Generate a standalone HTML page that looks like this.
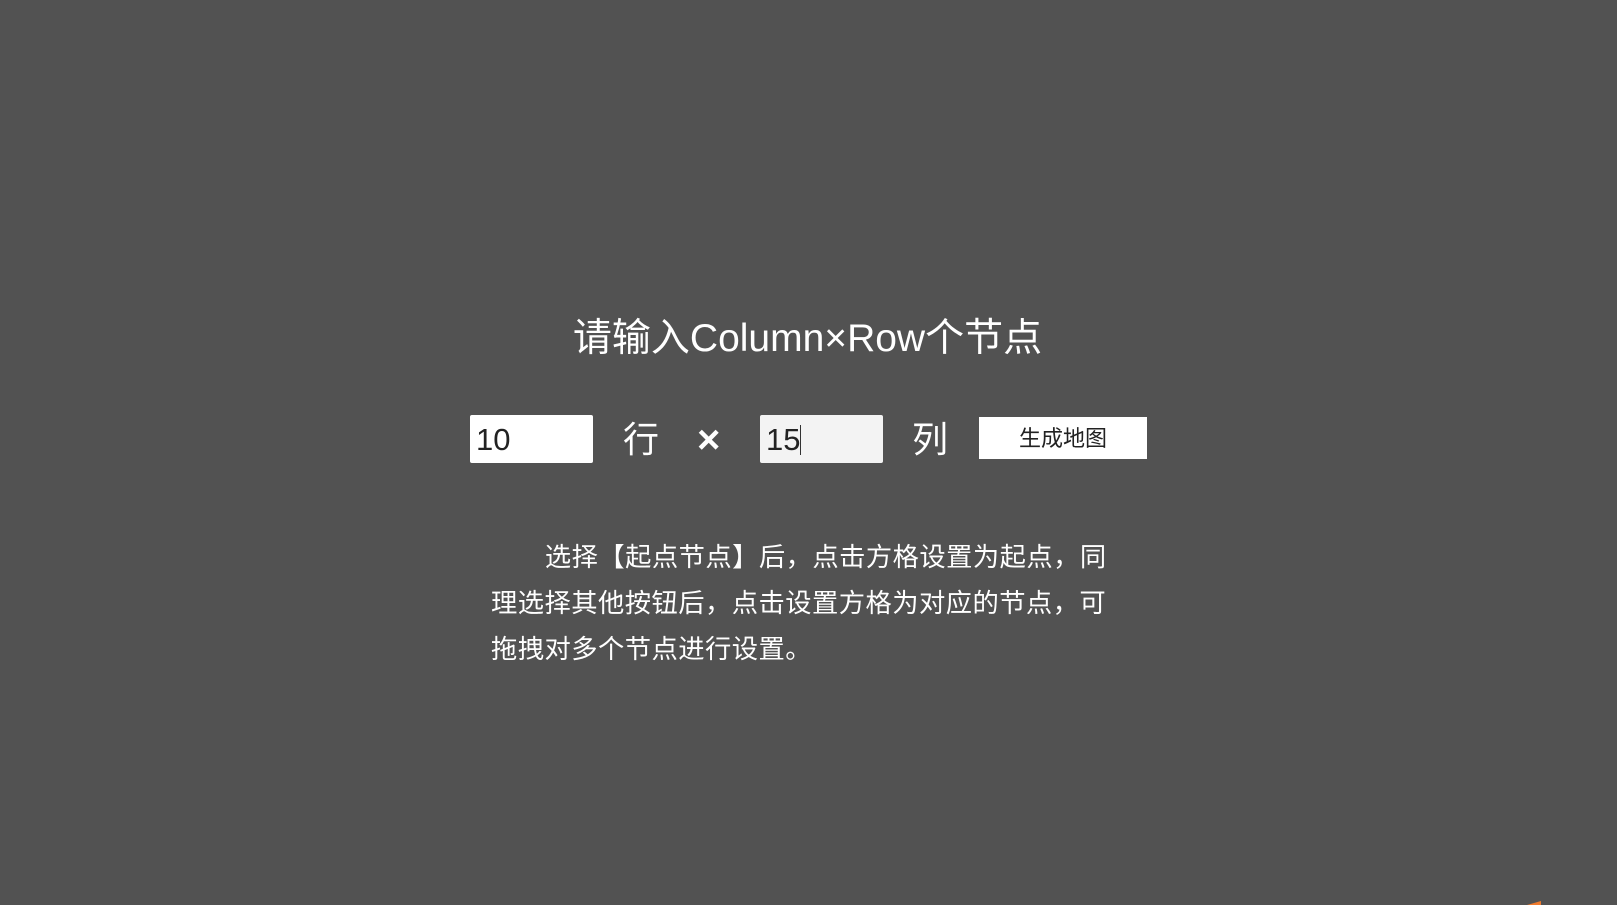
<!DOCTYPE html>
<html><head><meta charset="utf-8"><style>
html,body{margin:0;padding:0;width:1617px;height:905px;overflow:hidden;background:#525252;font-family:"Liberation Sans","Noto Sans CJK SC",sans-serif;color:#fff;position:relative}
.a{position:absolute}
.title{width:1617px;top:315px;text-align:center;font-size:39px;line-height:48px;left:-1px}
.inp{background:#fff;border-radius:2px;height:48px;width:123px;color:#222;font-size:31px;line-height:50px;box-sizing:border-box;padding-left:6px}
.lbl{font-size:36px;line-height:48px;top:416px}
.btn{left:979px;top:417px;width:168px;height:42px;background:#fff;color:#222;font-size:22px;line-height:44px;text-align:center}
.p{left:491px;top:534px;white-space:nowrap;font-size:26.3px;letter-spacing:0.45px;line-height:46px}
</style></head><body>
<div class="a title">请输入Column×Row个节点</div>
<div class="a inp" style="left:470px;top:415px">10</div>
<div class="a lbl" style="left:623px">行</div>
<div class="a lbl" style="left:697px;font-size:40px;font-weight:bold">×</div>
<div class="a inp" style="left:760px;top:415px;background:#f3f3f3">15<span style="display:inline-block;width:1px;height:30px;background:#333;vertical-align:middle;margin-top:-4px"></span></div>
<div class="a lbl" style="left:912px">列</div>
<div class="a btn">生成地图</div>
<div class="a p"><span style="display:inline-block;width:2.05em"></span>选择【起点节点】后，点击方格设置为起点，同<br>理选择其他按钮后，点击设置方格为对应的节点，可<br>拖拽对多个节点进行设置。</div>
<div class="a" style="left:1527px;top:901px;width:0;height:0;border-left:14px solid transparent;border-bottom:4px solid #f07a2c"></div>
</body></html>
